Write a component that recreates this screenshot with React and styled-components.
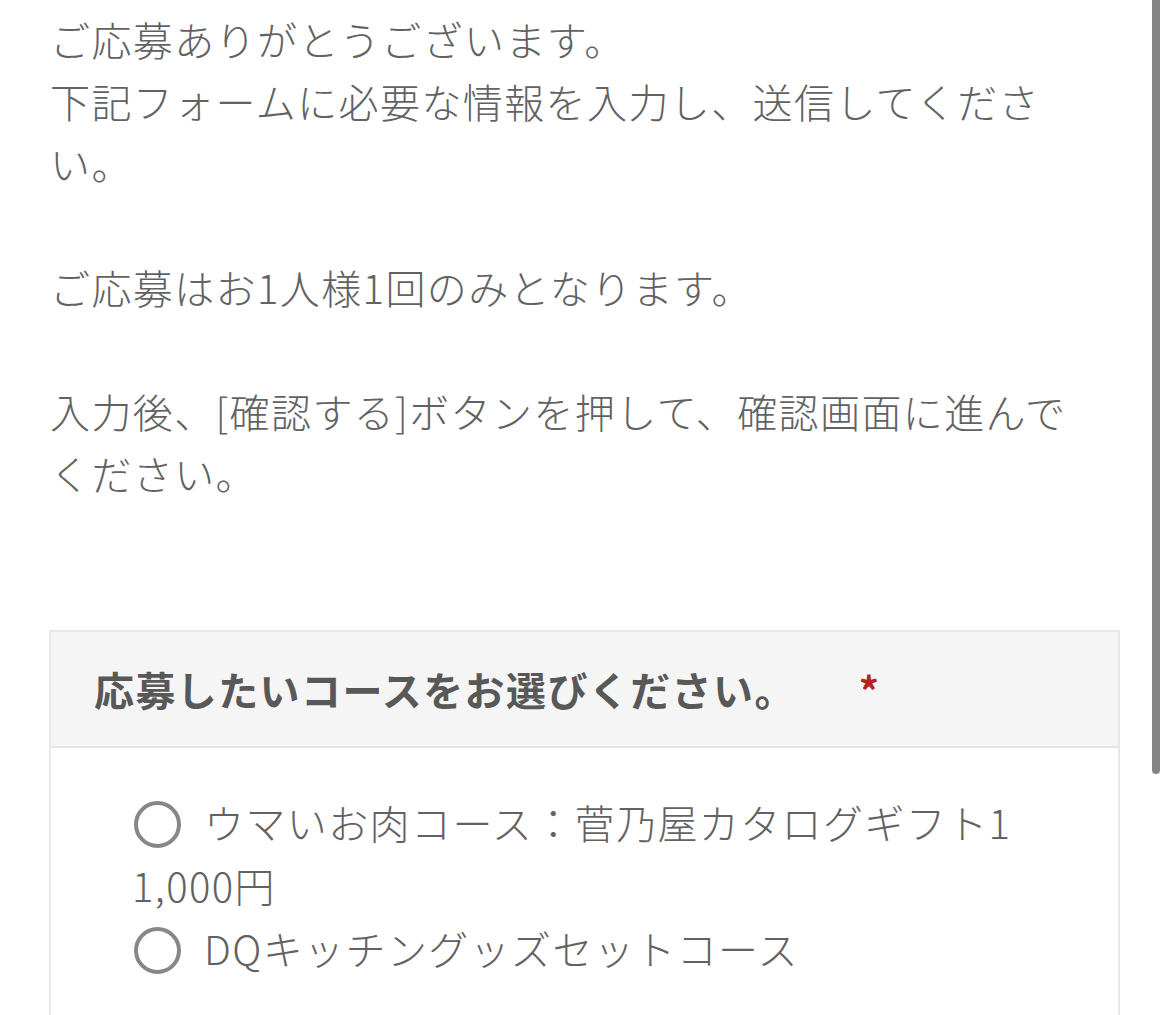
import React from 'react';
import styled, { createGlobalStyle } from 'styled-components';

const GlobalStyle = createGlobalStyle`
    html, body {
        margin: 0;
        padding: 0;
        background: #ffffff;
    }
    body {
        font-family: "Noto Sans CJK JP", "Noto Sans", sans-serif;
        color: #666666;
        overflow: hidden;
    }
`;

const Page = styled.div`
    padding: 8px 50px 0 49px;
    width: 1071px;
`;

const Intro = styled.div`
    width: 1030px;
    padding-left: 1px;
    font-size: 40px;
    font-weight: 300;
    letter-spacing: 1.4px;
    line-height: 62px;
    color: #626262;
`;

const Para = styled.p`
    margin: 0 0 62px 0;
    &:last-child {
        margin-bottom: 0;
    }
`;

const FormBox = styled.div`
    margin-top: 126px;
    border: 2px solid #e8e8e8;
    border-bottom: none;
`;

const Header = styled.div`
    display: flex;
    align-items: center;
    height: 114px;
    padding-left: 43px;
    background: #f5f5f5;
    border-bottom: 2px solid #e6e6e6;
`;

const Title = styled.span`
    font-size: 40px;
    font-weight: 700;
    letter-spacing: 1.4px;
    color: #585858;
`;

const Required = styled.span`
    margin-left: 63px;
    margin-top: 2px;
    font-family: "Noto Sans CJK JP", sans-serif;
    font-size: 40px;
    font-weight: 700;
    line-height: 1;
    color: #b3231f;
`;

const Body = styled.div`
    padding: 43px 90px 60px 81px;
    background: #ffffff;
`;

const Option = styled.label`
    display: block;
    font-size: 40px;
    font-weight: 300;
    letter-spacing: 1.4px;
    line-height: 63px;
    color: #626262;
    word-break: break-all;
`;

const Radio = styled.span`
    display: inline-block;
    box-sizing: border-box;
    width: 47px;
    height: 47px;
    margin: 0 23px 0 2px;
    border: 4px solid #878787;
    border-radius: 50%;
    vertical-align: -9px;
`;

const ScrollThumb = styled.div`
    position: fixed;
    top: 0;
    left: 1152px;
    width: 8px;
    height: 774px;
    border-radius: 0 0 4px 4px;
    background: #858585;
`;

const options = [
    'ウマいお肉コース：菅乃屋カタログギフト11,000円',
    'DQキッチングッズセットコース',
];

export default function App() {
    return (
        <>
            <GlobalStyle />
            <Page>
                <Intro>
                    <Para>
                        ご応募ありがとうございます。
                        <br />
                        下記フォームに必要な情報を入力し、送信してください。
                    </Para>
                    <Para>ご応募はお1人様1回のみとなります。</Para>
                    <Para>入力後、[確認する]ボタンを押して、確認画面に進んでください。</Para>
                </Intro>
                <FormBox>
                    <Header>
                        <Title>応募したいコースをお選びください。</Title>
                        <Required>*</Required>
                    </Header>
                    <Body>
                        {options.map((text) => (
                            <Option key={text}>
                                <Radio />
                                {text}
                            </Option>
                        ))}
                    </Body>
                </FormBox>
            </Page>
            <ScrollThumb />
        </>
    );
}
